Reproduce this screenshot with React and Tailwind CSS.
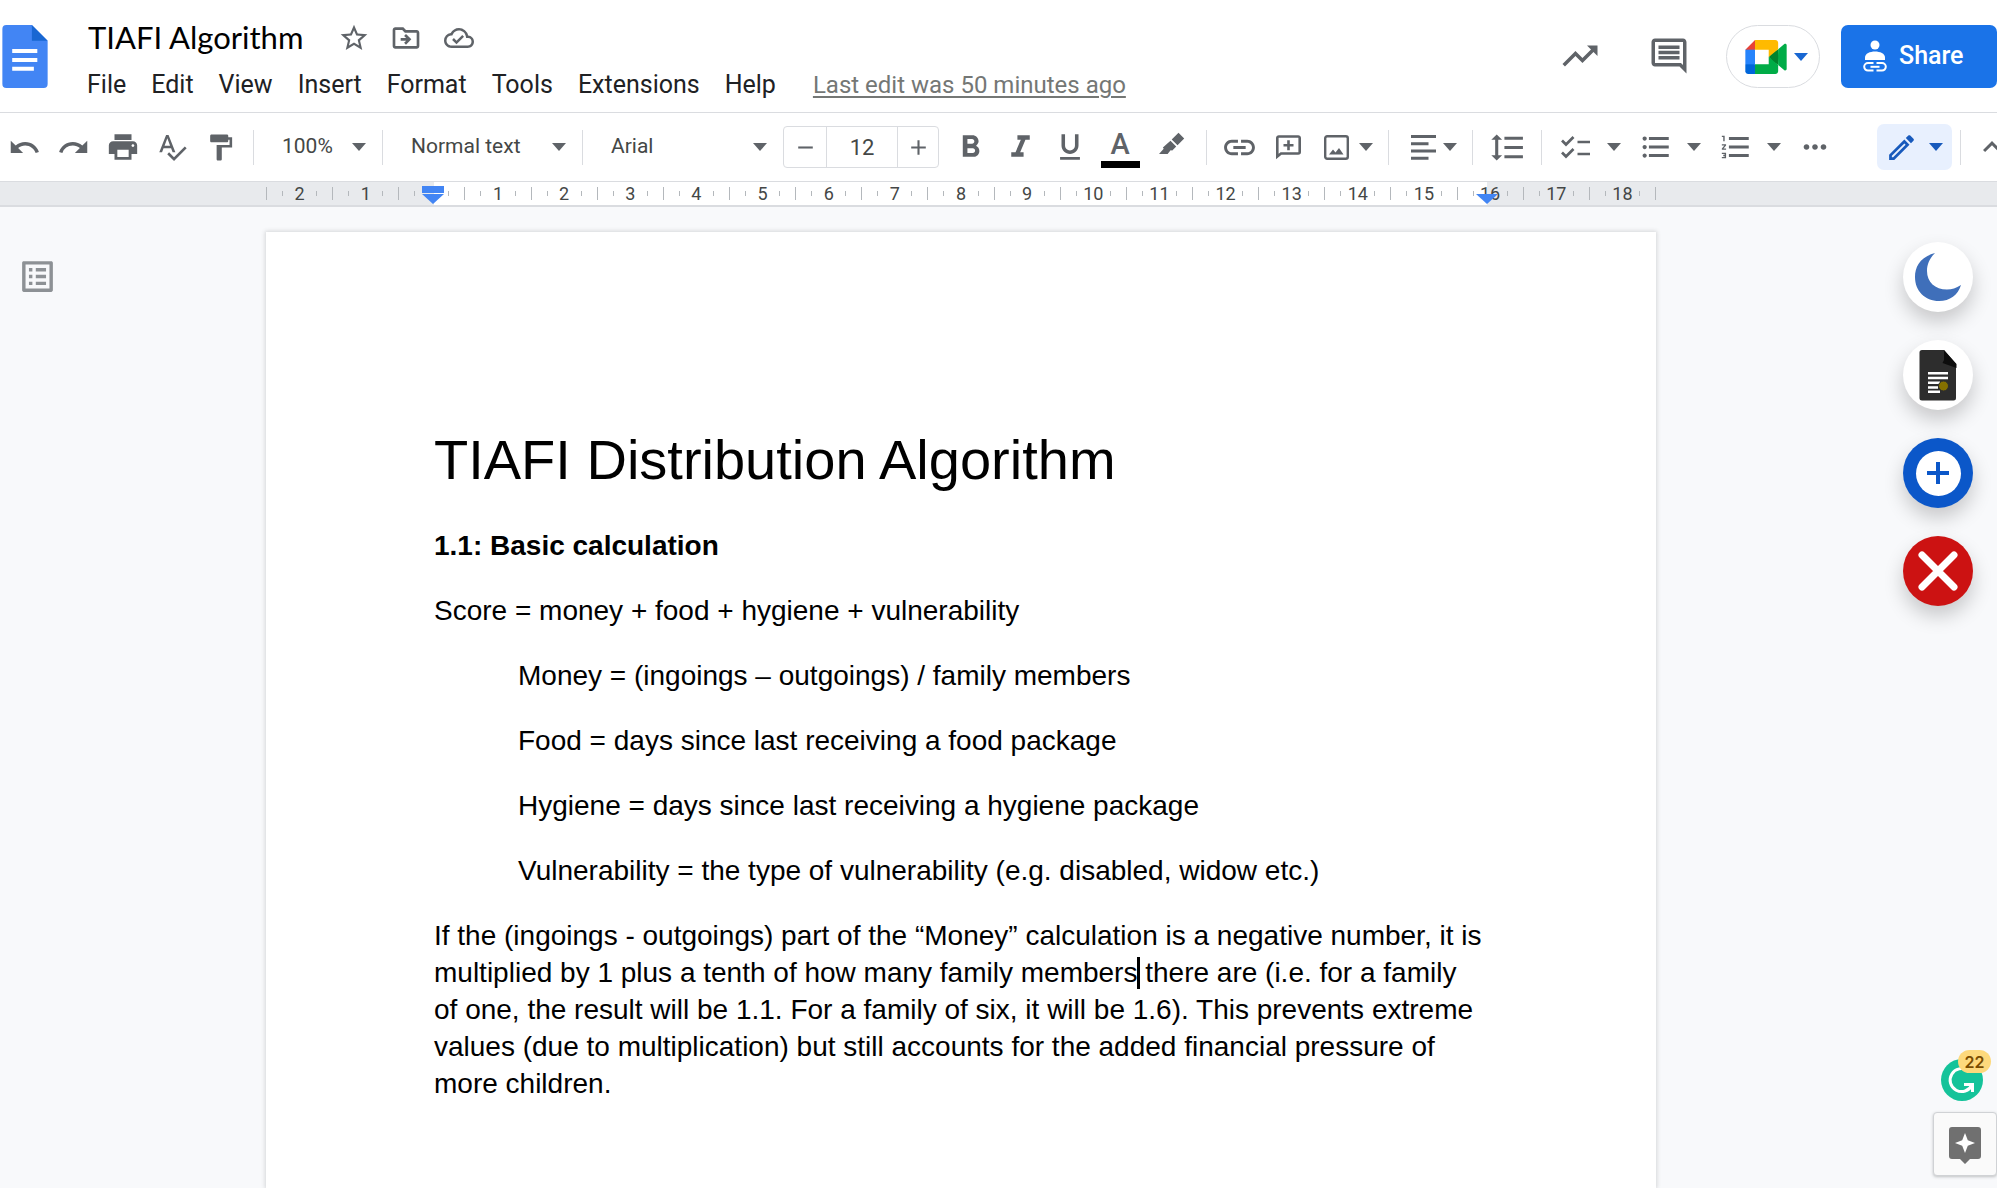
import React from "react";
import {
  MdStarBorder,
  MdOutlineDriveFileMove,
  MdOutlineCloudDone,
  MdTrendingUp,
  MdOutlineComment,
  MdUndo,
  MdRedo,
  MdPrint,
  MdSpellcheck,
  MdFormatPaint,
  MdFormatBold,
  MdFormatItalic,
  MdFormatUnderlined,
  MdLink,
  MdFormatLineSpacing,
  MdFormatListBulleted,
  MdFormatListNumbered,
  MdMoreHoriz,
  MdOutlineEdit,
  MdExpandLess,
  MdOutlineListAlt,
  MdRemove,
  MdAdd,
} from "react-icons/md";

const MENUS = ["File", "Edit", "View", "Insert", "Format", "Tools", "Extensions", "Help"];

/* Whole centimetres shown on the ruler, from the left page edge to the right one. */
const RULER_CELLS = Array.from({ length: 21 }, (_, i) => Math.abs(i - 2));

function Caret({ className = "" }) {
  return (
    <svg viewBox="0 0 14 8" className={`h-[8px] w-[14px] shrink-0 ${className}`} fill="currentColor" aria-hidden="true">
      <path d="M0 0h14L7 8z" />
    </svg>
  );
}

function Separator() {
  return <div className="mx-2 h-[35px] w-px shrink-0 bg-[#dadce0]" />;
}

function ToolButton({ label, width = "w-[49px]", children }) {
  return (
    <button type="button" aria-label={label} className={`flex h-[44px] shrink-0 items-center justify-center ${width}`}>
      {children}
    </button>
  );
}

function ListButton({ label, children }) {
  return (
    <button type="button" aria-label={label} className="flex h-[44px] w-[80px] shrink-0 items-center gap-[14px] pl-[9px]">
      {children}
      <Caret />
    </button>
  );
}

function ToolSelect({ label, value, width, caret = "right-2" }) {
  return (
    <div className={`relative flex h-[44px] shrink-0 items-center ${width}`}>
      <select
        aria-label={label}
        className="h-full w-full appearance-none bg-transparent pl-5 text-[21px] text-[#444746] outline-none"
      >
        <option>{value}</option>
      </select>
      <Caret className={`pointer-events-none absolute ${caret}`} />
    </div>
  );
}

function DocsLogo() {
  return (
    <svg viewBox="0 0 46 64" className="h-[63px] w-[46px]" aria-hidden="true">
      <path d="M4 0h26l16 16v44a4 4 0 0 1-4 4H4a4 4 0 0 1-4-4V4a4 4 0 0 1 4-4z" fill="#4285f4" />
      <path d="M30 0l16 16H30z" fill="#1967d2" />
      <path d="M10 24.500h25.500v4H10zM10 33.500h25.500v4H10zM10 42.500h22v4H10z" fill="#fff" />
    </svg>
  );
}

function MeetLogo() {
  return (
    <svg viewBox="0 0 87.500 72" className="h-[34px] w-[42px]" aria-hidden="true">
      <path fill="#00832d" d="M49.500 36l8.530 9.750 11.470 7.330 2-17.020-2-16.640-11.690 6.440z" />
      <path fill="#0066da" d="M0 51.500V66c0 3.315 2.685 6 6 6h14.500l3-10.960-3-9.540-9.950-3z" />
      <path fill="#e94235" d="M20.500 0L0 20.500l10.550 3 9.950-3 2.950-9.410z" />
      <path fill="#2684fc" d="M20.500 20.500H0v31h20.500z" />
      <path
        fill="#00ac47"
        d="M82.600 8.680L69.500 19.420v33.660l13.160 10.790c1.970 1.540 4.850.135 4.850-2.370V11c0-2.535-2.945-3.925-4.910-2.320zM49.500 36v15.500h-29V72h43c3.315 0 6-2.685 6-6V53.080z"
      />
      <path fill="#ffba00" d="M63.500 0h-43v20.500h29V36l20-16.570V6c0-3.315-2.685-6-6-6z" />
    </svg>
  );
}

function ShareIcon() {
  return (
    <svg viewBox="0 0 24 32" className="h-[32px] w-[24px]" aria-hidden="true">
      <circle cx="12" cy="5" r="4.500" fill="#fff" />
      <path d="M2 20v-2.500C2 13.500 7 11.500 12 11.500s10 2 10 6V20z" fill="#fff" />
      <g fill="none" stroke="#fff" strokeWidth="2">
        <path d="M10.500 23H5a3.800 3.800 0 0 0 0 7.600h5.500M13.500 23H19a3.800 3.800 0 0 1 0 7.600h-5.500" />
        <path d="M7.500 26.800h9" />
      </g>
    </svg>
  );
}

function Header() {
  return (
    <header className="flex h-[112px] shrink-0 items-start bg-white">
      <a href="#home" aria-label="Docs home" className="ml-[2px] mt-[25px] shrink-0">
        <DocsLogo />
      </a>
      <div className="ml-[28px] mt-[14px] flex min-w-0 flex-col">
        <div className="flex h-[47px] items-center text-[#5f6368]">
          <input
            aria-label="Document name"
            defaultValue="TIAFI Algorithm"
            className="ml-3 w-[236px] bg-transparent pb-px font-['Lato',sans-serif] text-[31px] text-black outline-none"
          />
          <button type="button" aria-label="Star" className="ml-[14px]"><MdStarBorder size={32} /></button>
          <button type="button" aria-label="Move" className="ml-5"><MdOutlineDriveFileMove size={32} /></button>
          <button type="button" aria-label="See document status" className="ml-[22px]"><MdOutlineCloudDone size={30} /></button>
        </div>
        <nav className="flex h-[48px] items-center gap-[3px] whitespace-nowrap text-[25px] text-[#202124]">
          {MENUS.map((m) => (
            <button key={m} type="button" className="px-[11px]">
              {m}
            </button>
          ))}
          <a href="#history" className="ml-[23px] text-[24px] text-[#747775] underline decoration-2 underline-offset-[3px]">
            Last edit was 50 minutes ago
          </a>
        </nav>
      </div>
      <div className="ml-auto mt-[25px] flex h-[63px] shrink-0 items-center text-[#5f6368]">
        <button type="button" aria-label="Activity dashboard" className="pb-[2px]"><MdTrendingUp size={42} /></button>
        <button type="button" aria-label="Comments" className="ml-[47px] pb-[2px]"><MdOutlineComment size={42} /></button>
        <button
          type="button"
          aria-label="Join a call"
          className="ml-9 flex h-full w-[94px] items-center justify-center gap-[7px] rounded-full border border-[#dadce0] pl-[7px] text-[#1967d2]"
        >
          <MeetLogo />
          <Caret />
        </button>
        <button
          type="button"
          className="ml-[21px] flex h-full w-[156px] items-center rounded-[7px] bg-[#1a73e8] pb-[2px] pl-[22px] text-[25px] font-medium text-white"
        >
          <ShareIcon />
          <span className="ml-3">Share</span>
        </button>
      </div>
    </header>
  );
}

function Toolbar() {
  return (
    <div role="toolbar" aria-label="Formatting" className="flex h-[70px] shrink-0 items-center overflow-hidden border-y border-[#dadce0] bg-white text-[#5f6368]">
      <ToolButton label="Undo"><MdUndo size={33} /></ToolButton>
      <ToolButton label="Redo"><MdRedo size={33} /></ToolButton>
      <ToolButton label="Print"><MdPrint size={34} /></ToolButton>
      <ToolButton label="Spelling and grammar check"><MdSpellcheck size={32} /></ToolButton>
      <ToolButton label="Paint format"><MdFormatPaint size={31} /></ToolButton>
      <Separator />
      <ToolSelect label="Zoom" value="100%" width="w-[112px]" />
      <Separator />
      <ToolSelect label="Styles" value="Normal text" width="w-[183px]" />
      <Separator />
      <ToolSelect label="Font" value="Arial" width="w-[192px]" caret="right-4" />
      <div className="flex h-[42px] w-[156px] shrink-0 items-stretch rounded-[4px] border border-[#dadce0]">
        <button type="button" aria-label="Decrease font size" className="flex w-[42px] items-center justify-center"><MdRemove size={25} /></button>
        <input aria-label="Font size" defaultValue="12" className="w-[72px] border-x border-[#dadce0] bg-transparent text-center text-[22px] text-[#444746] outline-none" />
        <button type="button" aria-label="Increase font size" className="flex w-[40px] items-center justify-center"><MdAdd size={25} /></button>
      </div>
      <div className="ml-[6px] flex items-center">
        <ToolButton label="Bold" width="w-[50px]"><MdFormatBold size={37} /></ToolButton>
        <ToolButton label="Italic" width="w-[50px]"><MdFormatItalic size={37} /></ToolButton>
        <ToolButton label="Underline" width="w-[50px]"><MdFormatUnderlined size={34} /></ToolButton>
        <ToolButton label="Text color" width="w-[50px]">
          <span className="flex flex-col items-center gap-[2px] pt-1">
            <span className="text-[29px] font-medium leading-[29px]">A</span>
            <span className="h-[7px] w-[39px] bg-black" />
          </span>
        </ToolButton>
        <ToolButton label="Highlight color" width="w-[53px]">
          <svg viewBox="0 0 26 26" className="mb-1 size-[26px]" fill="currentColor" aria-hidden="true">
            <path d="M19.500.800l5.700 5.700-6.700 6.700-5.800-5.700zM11.500 8.800l5.700 5.700-3.900 3.900-1.700-.2-3 3.800H0l4.700-5.300-.8-1.200 3.600-3.300z" />
          </svg>
        </ToolButton>
      </div>
      <Separator />
      <ToolButton label="Insert link"><MdLink size={37} /></ToolButton>
      <ToolButton label="Add comment">
        <svg viewBox="0 0 25 25" className="size-[25px]" fill="none" stroke="currentColor" strokeWidth="2.600" aria-hidden="true">
          <path d="M1.300 21.500V3a1.500 1.500 0 0 1 1.500-1.500h19.400A1.500 1.500 0 0 1 23.700 3v14a1.500 1.500 0 0 1-1.500 1.500H5z" />
          <path d="M12.500 5.200v10M7.500 10.200h10" />
        </svg>
      </ToolButton>
      <button type="button" aria-label="Insert image" className="flex h-[44px] w-[67px] shrink-0 items-center gap-[10px] pl-[11px]">
        <svg viewBox="0 0 25 25" className="size-[25px]" aria-hidden="true">
          <rect x="1.200" y="1.200" width="22.600" height="22.600" rx="2" fill="none" stroke="currentColor" strokeWidth="2.400" />
          <path d="M5 19.500l4-5 2.500 3 3.500-4.500 4.500 6.500z" fill="currentColor" />
        </svg>
        <Caret />
      </button>
      <Separator />
      <button type="button" aria-label="Align" className="flex h-[44px] w-[67px] shrink-0 items-center gap-[7px] pl-[14px]">
        <svg viewBox="0 0 25 25" className="size-[25px]" fill="currentColor" aria-hidden="true">
          <path d="M0 0h25v3H0zM0 7.300h17.500v3H0zM0 14.400h25v3H0zM0 21.700h17.500v3H0z" />
        </svg>
        <Caret />
      </button>
      <Separator />
      <ToolButton label="Line and paragraph spacing" width="w-[52px]"><MdFormatLineSpacing size={37} /></ToolButton>
      <Separator />
      <ListButton label="Checklist">
        <svg viewBox="0 0 34 25" className="h-[25px] w-[34px]" fill="none" stroke="currentColor" strokeWidth="2.700" aria-hidden="true">
          <path d="M3 5.500l4 4L14.500 2M3 17.500l4 4 7.500-7.500M18.500 7H31M18.500 19H31" />
        </svg>
      </ListButton>
      <ListButton label="Bulleted list"><MdFormatListBulleted size={34} /></ListButton>
      <ListButton label="Numbered list"><MdFormatListNumbered size={34} /></ListButton>
      <ToolButton label="More"><MdMoreHoriz size={34} /></ToolButton>
      <button
        type="button"
        aria-label="Editing mode"
        className="ml-auto flex h-[46px] w-[75px] shrink-0 items-center gap-[11px] rounded-[7px] bg-[#e8f0fe] pl-2 text-[#185abc]"
      >
        <MdOutlineEdit size={33} />
        <Caret />
      </button>
      <Separator />
      <button type="button" aria-label="Hide the menus" className="flex h-[44px] w-7 shrink-0 items-center pl-[5px]">
        <MdExpandLess size={36} className="shrink-0" />
      </button>
    </div>
  );
}

function Ruler() {
  return (
    <div className="h-[25px] shrink-0 border-b-2 border-[#dadce0] bg-[#e8eaed] pl-[266px] pr-[341px] text-[18px] leading-none text-[#444746]">
      <div className="relative flex h-full items-center bg-[linear-gradient(90deg,transparent_168px,#fff_168px,#fff_calc(100%-169px),transparent_calc(100%-169px))]">
        {RULER_CELLS.map((n, i) => (
          <div
            key={i}
            className={`flex h-[13px] flex-1 items-center justify-between border-[#b4b8bc] ${i === 20 ? "border-x" : "border-l"}`}
          >
            <span className="ml-[15px] h-[5px] w-px bg-[#b4b8bc]" />
            <span className="flex w-0 justify-center">{n === 0 ? "" : n}</span>
            <span className="mr-[15px] h-[5px] w-px bg-[#b4b8bc]" />
          </div>
        ))}
        <svg viewBox="0 0 22 18" className="absolute left-[156px] top-[4px] h-[18px] w-[22px]" fill="#4285f4" aria-hidden="true">
          <path d="M0 0h22v7H0zM0 8h22L11 18z" />
        </svg>
        <svg viewBox="0 0 22 10" className="absolute right-[158px] top-[12px] h-[10px] w-[22px]" fill="#4285f4" aria-hidden="true">
          <path d="M0 0h22L11 10z" />
        </svg>
      </div>
    </div>
  );
}

function Page() {
  return (
    <article className="mt-[25px] min-w-0 flex-1 bg-white pl-[168px] pr-[172px] pt-[190px] font-['Liberation_Sans',Arial,sans-serif] text-[28px] leading-[37px] text-black shadow-[0_0_4px_1px_rgba(60,64,67,0.18)]">
      <h1 className="text-[56px] leading-[75px]">TIAFI Distribution Algorithm</h1>
      <h2 className="mt-[30px] font-bold">1.1: Basic calculation</h2>
      <p className="mt-7">Score = money + food + hygiene + vulnerability</p>
      <div className="pl-[84px]">
        <p className="mt-7">Money = (ingoings – outgoings) / family members</p>
        <p className="mt-7">Food = days since last receiving a food package</p>
        <p className="mt-7">Hygiene = days since last receiving a hygiene package</p>
        <p className="mt-7">Vulnerability = the type of vulnerability (e.g. disabled, widow etc.)</p>
      </div>
      <p className="mt-7">
        If the (ingoings - outgoings) part of the “Money” calculation is a negative number, it is multiplied by 1 plus a
        tenth of how many family members
        <span className="relative">
          <span className="absolute left-0 top-0 h-[32px] w-[3px] bg-black" />
        </span>{" "}
        there are (i.e. for a family of one, the result will be 1.1. For a family of six, it will be 1.6). This prevents
        extreme values (due to multiplication) but still accounts for the added financial pressure of more children.
      </p>
    </article>
  );
}

const FLOAT = "flex size-[70px] items-center justify-center rounded-full shadow-[0_10px_20px_rgba(0,0,0,0.2)]";

function SideButtons() {
  return (
    <div className="flex flex-col gap-7">
      <button type="button" aria-label="Dark mode" className={`${FLOAT} bg-white`}>
        <svg viewBox="0 0 46 48" className="h-[48px] w-[46px]" fill="#3f6fba" aria-hidden="true">
          <path d="M20 0C5 4 0 14 0 24c0 14 10 24 24 24 11 0 19-6 22-16-5 3-9 4.500-14 4.500C20 36.500 12 29 12 18 12 11 15 5 20 0z" />
        </svg>
      </button>
      <button type="button" aria-label="Dark document" className={`${FLOAT} bg-white`}>
        <svg viewBox="0 0 38 52" className="h-[52px] w-[38px]" aria-hidden="true">
          <path d="M3 1h22l12 14v34a2.500 2.500 0 0 1-2.500 2.500H3A2.500 2.500 0 0 1 .500 49V3.500A2.500 2.500 0 0 1 3 1z" fill="#2d2d2d" />
          <path d="M25 1l12.500 14v4L23.500 14l1.500-3z" fill="#0d0d0d" />
          <path d="M9 23h20v2.500H9zM9 27.800h20v2.500H9zM9 32.600h12v2.500H9zM9 37.200h10v2.500H9zM9 41.500h12V44H9z" fill="#fff" />
          <circle cx="24.500" cy="37" r="5" fill="#857000" stroke="#2d2d2d" />
        </svg>
      </button>
      <button type="button" aria-label="Add" className={`${FLOAT} bg-[#0b57c9]`}>
        <span className="flex size-[45px] items-center justify-center rounded-full bg-white">
          <svg viewBox="0 0 22 22" className="size-[22px]" stroke="#0b57c9" strokeWidth="4" aria-hidden="true">
            <path d="M11 0v22M0 11h22" />
          </svg>
        </span>
      </button>
      <button type="button" aria-label="Close" className={`${FLOAT} bg-[#cc1212]`}>
        <svg viewBox="0 0 40 40" className="size-[40px]" stroke="#fff" strokeWidth="7" strokeLinecap="round" aria-hidden="true">
          <path d="M4 4l32 32M36 4L4 36" />
        </svg>
      </button>
    </div>
  );
}

function CornerButtons() {
  return (
    <div className="flex flex-col items-end">
      <button type="button" aria-label="22 writing suggestions" className="relative mr-[14px] size-[42px] rounded-full bg-[#15c39a]">
        <svg viewBox="0 0 42 42" className="size-[42px]" fill="none" stroke="#fff" strokeWidth="3" aria-hidden="true">
          <path d="M27 11.500A11.500 11.500 0 1 0 31 26M23 25.500h8.500V33" />
        </svg>
        <span className="absolute -right-2 -top-[9px] flex h-[23px] w-[33px] items-center justify-center rounded-full bg-[#fdd97c] font-['Inter',sans-serif] text-[16px] font-semibold text-[#7a4d00]">
          22
        </span>
      </button>
      <button
        type="button"
        aria-label="Explore"
        className="mt-[11px] flex h-[64px] w-[64px] items-center justify-center rounded-[4px] border border-[#d0d2d5] bg-[#fafafa] shadow-[0_1px_3px_rgba(60,64,67,0.3)]"
      >
        <svg viewBox="0 0 32 37" className="mt-[3px] h-[37px] w-[32px]" aria-hidden="true">
          <path d="M3 0h26a3 3 0 0 1 3 3v26a3 3 0 0 1-3 3h-8l-5 5-5-5H3a3 3 0 0 1-3-3V3a3 3 0 0 1 3-3z" fill="#707070" />
          <path d="M16 6l2.800 7.200L26 16l-7.200 2.800L16 26l-2.800-7.200L6 16l7.200-2.800z" fill="#fff" />
        </svg>
      </button>
    </div>
  );
}

export default function App() {
  return (
    <div className="flex h-screen flex-col overflow-hidden bg-[#f8f9fb] font-['Roboto',Arial,sans-serif]">
      <Header />
      <Toolbar />
      <Ruler />
      <main className="flex min-h-0 flex-1 overflow-hidden">
        <div className="w-[266px] shrink-0 pl-[17px] pt-[49px]">
          <button type="button" aria-label="Show document outline" className="text-[#8d9195]">
            <MdOutlineListAlt size={41} />
          </button>
        </div>
        <Page />
        <aside className="flex w-[341px] shrink-0 flex-col items-end justify-between pb-[12px] pt-[35px]">
          <div className="pr-6">
            <SideButtons />
          </div>
          <CornerButtons />
        </aside>
      </main>
    </div>
  );
}
